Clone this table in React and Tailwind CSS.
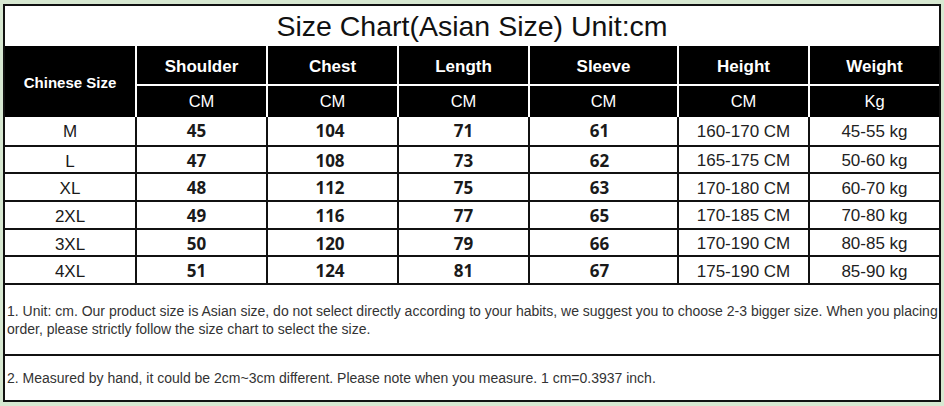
import React from "react";

const cols = "grid-cols-[130px_131px_131px_131px_149px_131px_131px]";

const heads = ["Shoulder", "Chest", "Length", "Sleeve", "Height", "Weight"];
const units = ["CM", "CM", "CM", "CM", "CM", "Kg"];

const rows = [
  ["M", "45", "104", "71", "61", "160-170 CM", "45-55 kg"],
  ["L", "47", "108", "73", "62", "165-175 CM", "50-60 kg"],
  ["XL", "48", "112", "75", "63", "170-180 CM", "60-70 kg"],
  ["2XL", "49", "116", "77", "65", "170-185 CM", "70-80 kg"],
  ["3XL", "50", "120", "79", "66", "170-190 CM", "80-85 kg"],
  ["4XL", "51", "124", "81", "67", "175-190 CM", "85-90 kg"],
];

const numPad = ["pr-[10px]", "pr-[5px]", "", "pr-[8px]"];

export default function App() {
  return (
    <div
      className="w-[944px] h-[406px] bg-[#d7e8d1] pt-[4px] pl-[3px]"
      style={{ fontFamily: '"Liberation Sans", Arial, sans-serif' }}
    >
      <div className="w-[938px] h-[398px] border-2 border-[#111] bg-white flex flex-col">
        {/* title */}
        <div className="h-[40px] flex items-center justify-center text-[28.5px] text-[#111] leading-none pt-[1px]">
          Size Chart(Asian Size) Unit:cm
        </div>

        {/* header */}
        <div className={`grid ${cols} grid-rows-[38px_33px] bg-black text-white h-[71px]`}>
          <div className="row-span-2 flex items-center justify-center font-bold text-[15px] pt-[3px]">
            Chinese Size
          </div>
          {heads.map((h) => (
            <div
              key={h}
              className="border-l-2 border-white flex items-center justify-center font-bold text-[17px] pt-[4px]"
            >
              {h}
            </div>
          ))}
          {units.map((u, i) => (
            <div
              key={i}
              className="border-l-2 border-t-2 border-white flex items-center justify-center text-[16.5px]"
            >
              {u}
            </div>
          ))}
        </div>

        {/* data */}
        <div className="grid grid-rows-6 h-[166px]">
          {rows.map((r, ri) => (
            <div
              key={ri}
              className={`grid ${cols} ${ri > 0 ? "border-t-2" : ""} border-[#111]`}
            >
              {r.map((c, ci) => {
                let cls = "flex items-center justify-center text-[#1a1a1a]";
                if (ci > 0) cls += " border-l-2 border-[#111]";
                if (ci === 0) cls += " text-[17px] pt-[2px]";
                else if (ci <= 4)
                  cls += " font-bold text-[17px] " + numPad[ci - 1];
                else cls += " text-[17px] text-[#222] pt-[1px]";
                return (
                  <div
                    key={ci}
                    className={cls}
                    style={
                      ci >= 1 && ci <= 4
                        ? { fontFamily: '"Open Sans", sans-serif' }
                        : undefined
                    }
                  >
                    {c}
                  </div>
                );
              })}
            </div>
          ))}
        </div>

        {/* notes */}
        <div className="h-[71px] border-t-2 border-[#111] pt-[17px] pl-[2px] pr-[1px] text-[14px] leading-[18px] text-[#333]">
          1. Unit: cm. Our product size is Asian size, do not select directly according to your habits, we suggest you to choose 2-3 bigger size. When you placing order, please strictly follow the size chart to select the size.
        </div>
        <div className="flex-1 border-t-2 border-[#111] flex items-center pl-[2px] text-[14px] text-[#333]">
          2. Measured by hand, it could be 2cm~3cm different. Please note when you measure. 1 cm=0.3937 inch.
        </div>
      </div>
    </div>
  );
}
